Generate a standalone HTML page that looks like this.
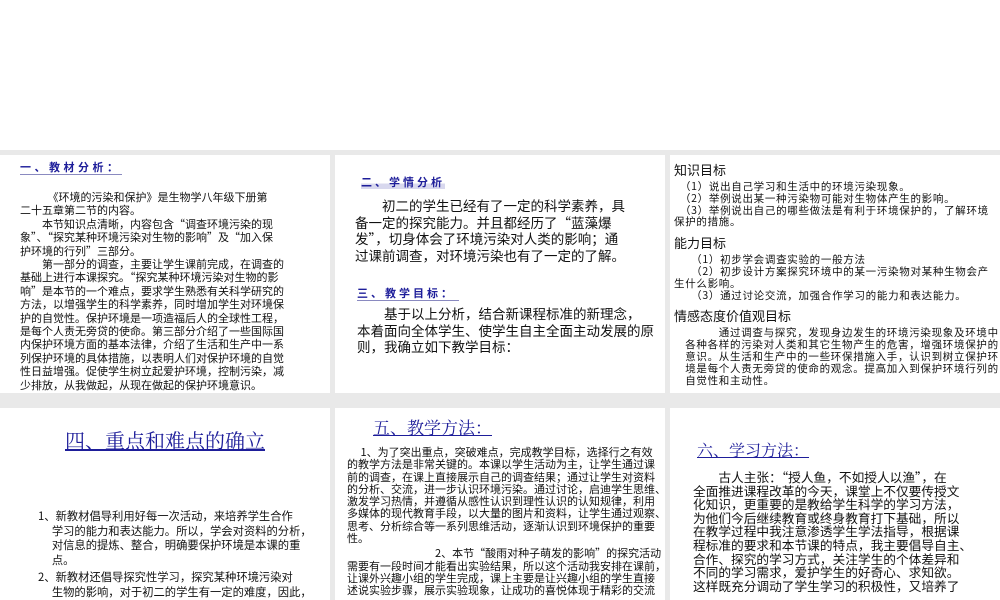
<!DOCTYPE html>
<html><head><meta charset="utf-8"><style>
*{margin:0;padding:0;box-sizing:border-box}
body{width:1000px;height:600px;overflow:hidden;background:#fff;position:relative;font-family:"Noto Sans CJK SC","Liberation Sans",sans-serif;color:#111}
.bg{position:absolute;left:0;top:150px;width:1000px;height:450px;background:#e9e9e9}
.p{position:absolute;background:#fff;overflow:hidden}
.a{position:absolute;white-space:nowrap}
.h{font-weight:bold;color:#1e1e9a;border-bottom:1px solid #8a8ac0}
.t{color:#1e1e9a;text-decoration:underline;font-family:"Noto Serif CJK SC","Liberation Serif",serif}
.k{font-size:13px;line-height:22px;margin-top:4px;letter-spacing:0}
</style></head><body>
<div class="bg"></div>
<div class="p" style="left:0;top:155px;width:330px;height:238px">
<div class="a h" style="left:20px;top:5px;font-size:11px;letter-spacing:3.5px;line-height:14px;width:102px">一、教材分析：</div>
<div class="a" style="left:20px;top:36px;font-size:11px;line-height:13.4px">
<div>　　　《环境的污染和保护》是生物学八年级下册第</div>
<div>二十五章第二节的内容。</div>
<div>　　本节知识点清晰，内容包含“调查环境污染的现</div>
<div>象”、“探究某种环境污染对生物的影响”及“加入保</div>
<div>护环境的行列”三部分。</div>
<div>　　第一部分的调查，主要让学生课前完成，在调查的</div>
<div>基础上进行本课探究。“探究某种环境污染对生物的影</div>
<div>响”是本节的一个难点，要求学生熟悉有关科学研究的</div>
<div>方法，以增强学生的科学素养，同时增加学生对环境保</div>
<div>护的自觉性。保护环境是一项造福后人的全球性工程，</div>
<div>是每个人责无旁贷的使命。第三部分介绍了一些国际国</div>
<div>内保护环境方面的基本法律，介绍了生活和生产中一系</div>
<div>列保护环境的具体措施，以表明人们对保护环境的自觉</div>
<div>性日益增强。促使学生树立起爱护环境，控制污染，减</div>
<div>少排放，从我做起，从现在做起的保护环境意识。</div>
</div></div>
<div class="p" style="left:335px;top:155px;width:330px;height:238px">
<div class="a h" style="left:26px;top:20px;font-size:11px;letter-spacing:3px;line-height:14px;border:0;background:linear-gradient(#fff 60%,#d8d8ee 60%)">二、学情分析</div>
<div class="a" style="left:20px;top:42px;font-size:13.5px;line-height:16.5px">
<div>　　初二的学生已经有了一定的科学素养，具</div>
<div>备一定的探究能力。并且都经历了“蓝藻爆</div>
<div>发”，切身体会了环境污染对人类的影响；通</div>
<div>过课前调查，对环境污染也有了一定的了解。</div>
</div>
<div class="a h" style="left:22px;top:131px;font-size:11px;letter-spacing:3px;line-height:14px;width:102px">三、教学目标：</div>
<div class="a" style="left:22px;top:150px;font-size:13.5px;line-height:16.5px">
<div>　　基于以上分析，结合新课程标准的新理念，</div>
<div>本着面向全体学生、使学生自主全面主动发展的原</div>
<div>则，我确立如下教学目标：</div>
</div></div>
<div class="p" style="left:670px;top:155px;width:330px;height:238px">
<div class="a" style="left:4px;top:0px;font-size:10.5px;line-height:11.8px;letter-spacing:0.7px">
<div class="k">知识目标</div>
<div>　（1）说出自己学习和生活中的环境污染现象。</div>
<div>　（2）举例说出某一种污染物可能对生物体产生的影响。</div>
<div>　（3）举例说出自己的哪些做法是有利于环境保护的，了解环境</div>
<div>保护的措施。</div>
<div class="k">能力目标</div>
<div>　　（1）初步学会调查实验的一般方法</div>
<div>　　（2）初步设计方案探究环境中的某一污染物对某种生物会产</div>
<div>生什么影响。</div>
<div>　　（3）通过讨论交流，加强合作学习的能力和表达能力。</div>
<div class="k">情感态度价值观目标</div>
<div>　　　　通过调查与探究，发现身边发生的环境污染现象及环境中</div>
<div>　各种各样的污染对人类和其它生物产生的危害，增强环境保护的</div>
<div>　意识。从生活和生产中的一些环保措施入手，认识到树立保护环</div>
<div>　境是每个人责无旁贷的使命的观念。提高加入到保护环境行列的</div>
<div>　自觉性和主动性。</div>
</div></div>
<div class="p" style="left:0;top:408px;width:330px;height:192px">
<div class="a t" style="left:65px;top:20px;font-size:20px;line-height:24px">四、重点和难点的确立</div>
<div class="a" style="left:38px;top:101px;font-size:11.3px;line-height:14.5px">
<div>1、新教材倡导利用好每一次活动，来培养学生合作</div>
<div>　 学习的能力和表达能力。所以，学会对资料的分析，</div>
<div>　 对信息的提炼、整合，明确要保护环境是本课的重</div>
<div>　 点。</div>
<div style="margin-top:3px">2、新教材还倡导探究性学习，探究某种环境污染对</div>
<div>　 生物的影响，对于初二的学生有一定的难度，因此，</div>
<div>　 本课探究实验的设计与操作是本课难点。</div>
</div></div>
<div class="p" style="left:335px;top:408px;width:330px;height:192px">
<div class="a t" style="left:38px;top:8px;font-size:17px;line-height:22px">五、教学方法：</div>
<div class="a" style="left:12px;top:38px;font-size:11px;line-height:12.3px">
<div>　 1、为了突出重点，突破难点，完成教学目标，选择行之有效</div>
<div>的教学方法是非常关键的。本课以学生活动为主，让学生通过课</div>
<div>前的调查，在课上直接展示自己的调查结果；通过让学生对资料</div>
<div>的分析、交流，进一步认识环境污染。通过讨论，启迪学生思维、</div>
<div>激发学习热情，并遵循从感性认识到理性认识的认知规律，利用</div>
<div>多媒体的现代教育手段，以大量的图片和资料，让学生通过观察、</div>
<div>思考、分析综合等一系列思维活动，逐渐认识到环境保护的重要</div>
<div>性。</div>
<div style="margin-top:3px">　　　　　　　　2、本节“酸雨对种子萌发的影响”的探究活动</div>
<div>需要有一段时间才能看出实验结果，所以这个活动我安排在课前，</div>
<div>让课外兴趣小组的学生完成，课上主要是让兴趣小组的学生直接</div>
<div>述说实验步骤，展示实验现象，让成功的喜悦体现于精彩的交流</div>
</div></div>
<div class="p" style="left:670px;top:408px;width:330px;height:192px">
<div class="a t" style="left:27px;top:32px;font-size:16px;line-height:20px">六、学习方法：</div>
<div class="a" style="left:23px;top:62px;font-size:12.7px;line-height:13.6px">
<div>　　古人主张：“授人鱼，不如授人以渔”，在</div>
<div>全面推进课程改革的今天，课堂上不仅要传授文</div>
<div>化知识，更重要的是教给学生科学的学习方法，</div>
<div>为他们今后继续教育或终身教育打下基础，所以</div>
<div>在教学过程中我注意渗透学生学法指导，根据课</div>
<div>程标准的要求和本节课的特点，我主要倡导自主、</div>
<div>合作、探究的学习方式，关注学生的个体差异和</div>
<div>不同的学习需求，爱护学生的好奇心、求知欲。</div>
<div>这样既充分调动了学生学习的积极性，又培养了</div>
</div></div>
</body></html>
